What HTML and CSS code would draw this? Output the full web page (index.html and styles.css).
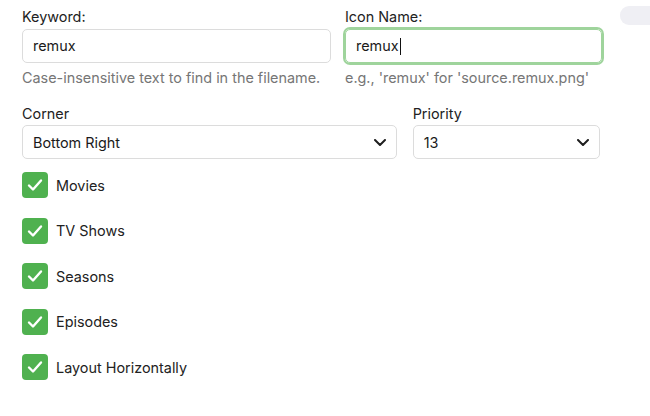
FILE: index.html
```html
<!DOCTYPE html>
<html>
<head>
<meta charset="utf-8">
<link rel="stylesheet" href="styles.css">
</head>
<body>
<div class="toggle-peek"></div>
<form class="form">
  <div class="row-top">
    <div class="field field-keyword">
      <label class="label">Keyword:</label>
      <div class="input">remux</div>
      <div class="help">Case-insensitive text to find in the filename.</div>
    </div>
    <div class="field field-icon">
      <label class="label">Icon Name:</label>
      <div class="input input-focus">remux<span class="caret"></span></div>
      <div class="help">e.g., 'remux' for 'source.remux.png'</div>
    </div>
  </div>
  <div class="row-selects">
    <div class="field">
      <label class="label label-sel">Corner</label>
      <div class="select">
        <span>Bottom Right</span>
        <svg class="chev" width="12" height="7" viewBox="0 0 12 7"><polyline points="1,1 6,6 11,1" fill="none" stroke="#1f1f1f" stroke-width="2" stroke-linecap="round" stroke-linejoin="round"/></svg>
      </div>
    </div>
    <div class="field">
      <label class="label label-sel">Priority</label>
      <div class="select">
        <span>13</span>
        <svg class="chev" width="12" height="7" viewBox="0 0 12 7"><polyline points="1,1 6,6 11,1" fill="none" stroke="#1f1f1f" stroke-width="2" stroke-linecap="round" stroke-linejoin="round"/></svg>
      </div>
    </div>
  </div>
  <div class="checks">
    <div class="check"><span class="box"><svg width="26" height="26" viewBox="0 0 26 26"><polyline points="7,13.5 11,17.5 19,8.5" fill="none" stroke="#fff" stroke-width="2.4" stroke-linecap="round" stroke-linejoin="round"/></svg></span><span class="check-label">Movies</span></div>
    <div class="check"><span class="box"><svg width="26" height="26" viewBox="0 0 26 26"><polyline points="7,13.5 11,17.5 19,8.5" fill="none" stroke="#fff" stroke-width="2.4" stroke-linecap="round" stroke-linejoin="round"/></svg></span><span class="check-label">TV Shows</span></div>
    <div class="check"><span class="box"><svg width="26" height="26" viewBox="0 0 26 26"><polyline points="7,13.5 11,17.5 19,8.5" fill="none" stroke="#fff" stroke-width="2.4" stroke-linecap="round" stroke-linejoin="round"/></svg></span><span class="check-label">Seasons</span></div>
    <div class="check"><span class="box"><svg width="26" height="26" viewBox="0 0 26 26"><polyline points="7,13.5 11,17.5 19,8.5" fill="none" stroke="#fff" stroke-width="2.4" stroke-linecap="round" stroke-linejoin="round"/></svg></span><span class="check-label">Episodes</span></div>
    <div class="check"><span class="box"><svg width="26" height="26" viewBox="0 0 26 26"><polyline points="7,13.5 11,17.5 19,8.5" fill="none" stroke="#fff" stroke-width="2.4" stroke-linecap="round" stroke-linejoin="round"/></svg></span><span class="check-label">Layout Horizontally</span></div>
  </div>
</form>
</body>
</html>
```
FILE: styles.css
```css
html, body {
  margin: 0;
  padding: 0;
  background: #fff;
}
body {
  font-family: Inter, "Noto Sans", sans-serif;
  font-size: 14.4px;
  color: #222;
  position: relative;
  width: 650px;
  height: 416px;
  overflow: hidden;
}
.toggle-peek {
  position: absolute;
  left: 620px;
  top: 6px;
  width: 60px;
  height: 19px;
  border-radius: 9px;
  background: #efeff4;
}
.form {
  padding: 8px 0 0 22px;
  width: 580px;
}
.row-top {
  display: grid;
  grid-template-columns: 309px 257px;
  column-gap: 14px;
}
.field {
  display: flex;
  flex-direction: column;
}
.label {
  display: block;
  font-size: 14.4px;
  line-height: 17px;
  color: #222;
  margin-bottom: 4px;
}
.input {
  box-sizing: border-box;
  height: 34px;
  border: 1px solid #dcdcdc;
  border-radius: 5px;
  padding: 0 10px;
  font-size: 14.4px;
  line-height: 32px;
  color: #1a1a1a;
  display: flex;
  align-items: center;
}
.input-focus {
  border-color: #9fd49c;
  box-shadow: 0 0 0 2px #9fd49c;
}
.caret {
  display: inline-block;
  width: 1px;
  height: 17px;
  background: #111;
  margin-left: 1px;
}
.help {
  margin-top: 6px;
  font-size: 14.4px;
  line-height: 17px;
  color: #767676;
  white-space: nowrap;
}
.row-selects {
  margin-top: 19px;
  width: 578px;
  display: grid;
  grid-template-columns: 2fr 1fr;
  column-gap: 16px;
}
.label-sel {
  margin-bottom: 3px;
}
.select {
  box-sizing: border-box;
  height: 34px;
  border: 1px solid #dcdcdc;
  border-radius: 5px;
  padding: 0 10px;
  display: flex;
  align-items: center;
  justify-content: space-between;
  font-size: 14.4px;
  color: #1a1a1a;
}
.chev {
  display: block;
  margin-top: 1px;
}
.checks {
  margin-top: 13px;
  display: flex;
  flex-direction: column;
  gap: 19.5px;
}
.check {
  display: flex;
  align-items: center;
  gap: 8px;
  height: 26px;
}
.box {
  width: 26px;
  height: 26px;
  border-radius: 4px;
  background: #4fb14f;
  display: block;
}
.box svg {
  display: block;
}
.check-label {
  font-size: 14.4px;
  color: #222;
}
```
